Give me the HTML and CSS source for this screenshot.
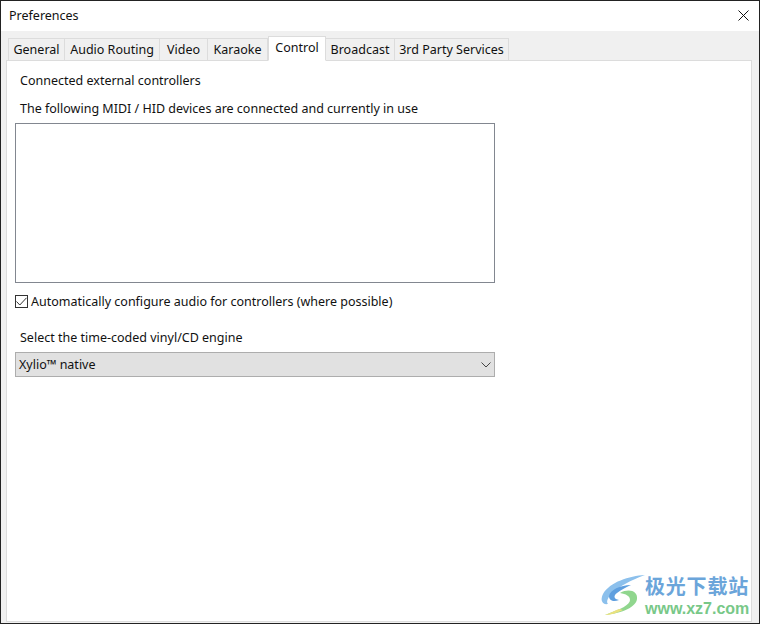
FILE: index.html
```html
<!DOCTYPE html>
<html lang="en">
<head>
<meta charset="utf-8">
<title>Preferences</title>
<link rel="stylesheet" href="styles.css">
</head>
<body>
<div class="window">
  <header class="titlebar">
    <span class="title">Preferences</span>
    <svg class="close" width="11" height="11" viewBox="0 0 11 11"><path d="M0.5 0.5L10.5 10.5M10.5 0.5L0.5 10.5" stroke="#111" stroke-width="1" fill="none"/></svg>
  </header>
  <div class="dialog">
    <nav class="tabs">
      <span class="tab t1">General</span>
      <span class="tab t2">Audio Routing</span>
      <span class="tab t3">Video</span>
      <span class="tab t4">Karaoke</span>
      <span class="tab active">Control</span>
      <span class="tab t6">Broadcast</span>
      <span class="tab t7">3rd Party Services</span>
    </nav>
    <main class="panel">
      <p class="label first">Connected external controllers</p>
      <p class="label second">The following MIDI / HID devices are connected and currently in use</p>
      <div class="listbox"></div>
      <label class="check">
        <span class="box"><svg width="11" height="9" viewBox="0 0 11 9"><path d="M0.5 4.5L3.8 8L10.5 0.8" stroke="#333" stroke-width="1" fill="none"/></svg></span>
        <span>Automatically configure audio for controllers (where possible)</span>
      </label>
      <p class="label third">Select the time-coded vinyl/CD engine</p>
      <div class="combo">
        <span>Xylio™ native</span>
        <svg width="10" height="6" viewBox="0 0 10 6"><path d="M0.5 0.5L5 5L9.5 0.5" stroke="#444" stroke-width="1" fill="none"/></svg>
      </div>
    </main>
  </div>
  <div class="watermark">
    <svg class="wm-logo" width="46" height="42" viewBox="0 0 46 42">
      <path d="M46 1C30 2 11 8 4 20C1 26 3 31 9 30C5 25 16 12 46 1Z" fill="#8cc0ec"/>
      <path d="M32 11C21 11 11 16 10 22C10 27 15 28 20 26C15 25 14 22 18 19C22 16 27 13 32 11Z" fill="#5f9fdf"/>
      <path d="M21 19C30 14 39 17 38 25C37 33 24 39 6 41C22 35 31 31 31 26C31 22 27 20 21 19Z" fill="#90d68e"/>
      <path d="M20 35C13 38 9 40 6 41C11 41 18 39 24 36Z" fill="#ebe17e"/>
    </svg>
    <div class="wm-text">
      <span class="wm-cn">极光下载站</span>
      <span class="wm-url">www.xz7.com</span>
    </div>
  </div>
</div>
</body>
</html>
```
FILE: styles.css
```css
* { box-sizing: border-box; }
html, body { margin: 0; padding: 0; }
body {
  width: 760px;
  height: 624px;
  overflow: hidden;
  background: #222;
  font-family: "Noto Sans", "Liberation Sans", sans-serif;
  font-size: 12.5px;
  color: #111;
}
.window {
  position: relative;
  width: 758px;
  height: 622px;
  margin: 1px 0 0 1px;
  background: #f0f0f0;
  display: flex;
  flex-direction: column;
}
.titlebar {
  height: 30px;
  flex: none;
  background: #fff;
  display: flex;
  align-items: center;
  justify-content: space-between;
  padding: 0 10px 2px 8px;
}
.dialog {
  flex: 1;
  display: flex;
  flex-direction: column;
  padding: 5px 7px 1px 5px;
  min-height: 0;
}
.tabs {
  display: flex;
  height: 24px;
  flex: none;
  align-items: flex-end;
  padding-left: 2px;
  position: relative;
  z-index: 1;
}
.tab {
  height: 23px;
  margin-bottom: -1px;
  border: 1px solid #dcdcdc;
  border-left-width: 0;
  background: #f0f0f0;
  display: flex;
  align-items: center;
  justify-content: center;
  white-space: nowrap;
}
.t1 { width: 57px; border-left-width: 1px; }
.t2 { width: 95px; }
.t3 { width: 48px; }
.t4 { width: 60px; }
.active {
  width: 58px;
  height: 25px;
  background: #fff;
  border-left-width: 1px;
  border-bottom-color: #fff;
  padding-bottom: 3px;
}
.t6 { width: 69px; }
.t7 { width: 114px; }
.panel {
  flex: 1;
  background: #fff;
  border: 1px solid #dcdcdc;
  padding: 0 0 0 8px;
  min-height: 0;
}
.label { margin: 0; line-height: 18px; padding-left: 5px; }
.first { margin-top: 11px; }
.second { margin-top: 10px; }
.listbox {
  width: 480px;
  height: 160px;
  margin-top: 5px;
  border: 1px solid #828790;
  background: #fff;
}
.check {
  display: flex;
  align-items: center;
  gap: 3px;
  height: 18px;
  margin-top: 9px;
}
.box {
  width: 13px;
  height: 13px;
  border: 1px solid #333;
  background: #fff;
  display: flex;
  align-items: center;
  justify-content: center;
}
.third { margin-top: 19px; }
.combo {
  width: 480px;
  height: 25px;
  margin-top: 5px;
  background: #e1e1e1;
  border: 1px solid #adadad;
  display: flex;
  align-items: center;
  justify-content: space-between;
  padding: 0 3px;
}
.watermark {
  position: absolute;
  left: 598px;
  top: 570px;
  display: flex;
  gap: 0;
  align-items: flex-start;
}
.wm-logo { margin-top: 3px; }
.wm-text { display: flex; flex-direction: column; }
.wm-cn { font-family: "Noto Sans CJK SC", sans-serif; font-weight: 700; font-size: 20px; line-height: 29px; color: #6ba5da; letter-spacing: 0.8px; }
.wm-url { font-family: "Liberation Sans", sans-serif; font-weight: 700; font-size: 16px; line-height: 18px; color: #78c888; }
```
